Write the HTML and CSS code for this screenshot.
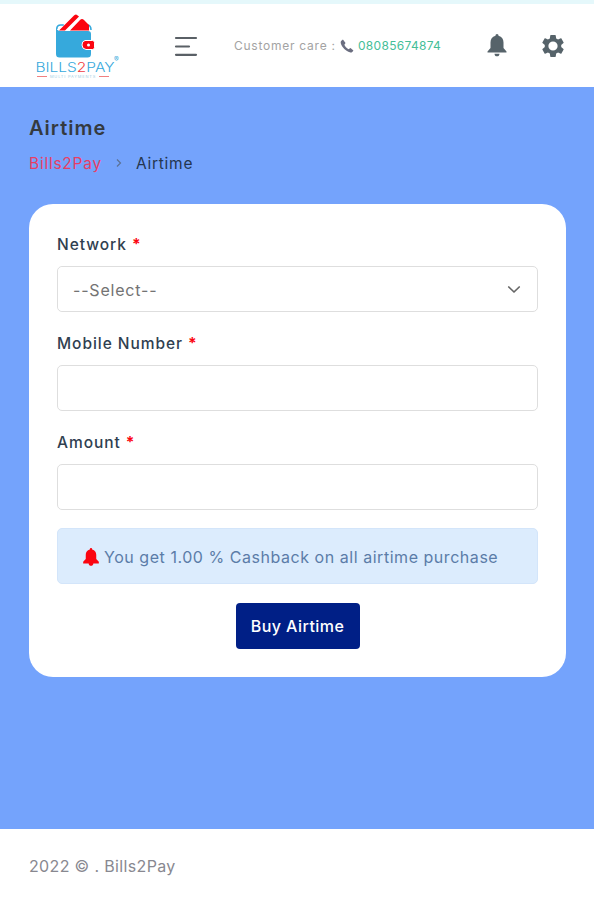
FILE: index.html
```
<!DOCTYPE html>
<html lang="en">
<head>
    <meta charset="UTF-8">
    <meta name="viewport" content="width=device-width, initial-scale=1.0">
    <title>Airtime</title>
    <link rel="stylesheet" href="styles.css">
</head>
<body>
    <header class="topbar">
        <a href="#" class="logo">
            <svg width="90" height="64" viewBox="0 0 90 64">
                <path d="M24 15v28q0 3.500 3.500 3.500h28q3.500 0 3.500-3.500V23q0-3-3-3H29q-5 0-5-5z" fill="#36a9dc"/>
                <path d="M24.800 18q0-4 4-4h3M55 14q4 0 4 5" fill="none" stroke="#36a9dc" stroke-width="1.600"/>
                <path d="M27 19.500 42 4.500q2-1.500 3-.500l2 1.500-14 14zM38 19.500 48 9q2-2 4 0l5 5v5.500z" fill="#fb0510"/>
                <path d="M53 29.500h7.500q2 0 2 2v5q0 2-2 2H54q-4-.500-4-4.500t3-4.500z" fill="#fb0510" stroke="#fff" stroke-width="1"/>
                <circle cx="56.500" cy="34" r="1.500" fill="#fff"/>
                <text x="3.500" y="60.500" class="logo_name" textLength="79" lengthAdjust="spacingAndGlyphs">BILLS<tspan fill="#ef3b41">2</tspan>PAY</text>
                <text x="82" y="51" class="logo_reg">®</text>
            </svg>
            <span class="logo_sub"><i></i>MULTI PAYMENTS<i></i></span>
        </a>
        <button type="button" class="btn_menu">
            <svg width="24" height="22" viewBox="0 0 24 22" stroke="#5a6066" stroke-width="2.200" stroke-linecap="round">
                <path d="M2 3h20M2 11.500h13M2 19.800h20"/>
            </svg>
        </button>
        <p class="care">
            <span class="care_txt">Customer care :</span>
            <svg class="phone" width="14" height="14" viewBox="0 0 24 24" fill="#6b6e80">
                <path d="M5 1 1.800 3.500C.500 5 1 9 4.500 13.500S13 22 18 23c2 .400 3-.500 5-3.500l-5-4.200-3.500 2.200C11.500 16 8.500 13 7.500 10L9.500 7z"/>
            </svg>
            <a href="#" class="care_no">08085674874</a>
        </p>
        <button type="button" class="btn_bell">
            <svg width="20" height="23" viewBox="0 0 20 23" fill="#56636a">
                <path d="M10 0c1 0 1.500.700 1.500 1.800 3.500.800 5 3.400 5 6.700v5.500l3 3.500v1H.500v-1l3-3.500V8.500c0-3.300 1.500-5.900 5-6.700C8.500.700 9 0 10 0zM7.500 19.700h5c0 1.600-1 2.600-2.500 2.600s-2.500-1-2.500-2.600z"/>
            </svg>
        </button>
        <button type="button" class="btn_setting">
            <svg width="22" height="22" viewBox="2 2 20 20" fill="#56636a">
                <path d="M19.430 12.980c.040-.320.070-.640.070-.980s-.030-.660-.070-.980l2.110-1.650c.190-.150.240-.420.120-.640l-2-3.460c-.120-.220-.390-.300-.610-.220l-2.490 1c-.520-.400-1.080-.730-1.690-.980l-.380-2.650C14.460 2.180 14.250 2 14 2h-4c-.250 0-.460.180-.490.420l-.380 2.650c-.610.250-1.170.590-1.690.980l-2.490-1c-.230-.090-.490 0-.610.220l-2 3.460c-.130.220-.070.490.120.640l2.110 1.650c-.040.320-.070.650-.070.980s.030.660.070.980l-2.110 1.650c-.190.150-.240.420-.120.640l2 3.460c.120.220.390.300.610.220l2.490-1c.520.400 1.080.730 1.690.980l.380 2.650c.030.240.240.420.490.420h4c.250 0 .460-.180.490-.420l.380-2.650c.610-.250 1.170-.590 1.690-.980l2.490 1c.230.090.490 0 .610-.220l2-3.460c.120-.220.070-.490-.120-.640zM12 16.200a4.200 4.200 0 1 1 0-8.400 4.200 4.200 0 0 1 0 8.400z"/>
            </svg>
        </button>
    </header>
    <main class="content">
        <h1>Airtime</h1>
        <nav class="breadcrumb">
            <a href="#">Bills2Pay</a>
            <svg width="6" height="8" viewBox="0 0 6 8" fill="none" stroke="#5b7194" stroke-width="1.200">
                <path d="M1 .500 4.500 4 1 7.500"/>
            </svg>
            <span>Airtime</span>
        </nav>
        <form action="" class="card">
            <label for="network">Network <b>*</b></label>
            <div class="select_box">
                <select id="network">
                    <option value="">--Select--</option>
                </select>
                <svg width="14" height="9" viewBox="0 0 14 9" fill="none" stroke="#666" stroke-width="1.700" stroke-linecap="round" stroke-linejoin="round">
                    <path d="M1.800 2 7 7l5.200-5"/>
                </svg>
            </div>
            <label for="mobile">Mobile Number <b>*</b></label>
            <input type="text" id="mobile">
            <label for="amount">Amount <b>*</b></label>
            <input type="text" id="amount">
            <div class="notice">
                <svg width="16" height="18" viewBox="0 0 20 23" fill="#fb0510">
                    <path d="M10 0c1 0 1.500.700 1.500 1.800 3.500.800 5.200 3.400 5.200 6.700v5.500l3.300 3.500v2.200h-7c0 1.600-1.500 3-3 3s-3-1.400-3-3H0v-2.200l3.300-3.500V8.500c0-3.300 1.700-5.900 5.200-6.700C8.500.700 9 0 10 0z"/>
                </svg>
                <span>You get 1.00 % Cashback on all airtime purchase</span>
            </div>
            <button type="button" class="btn_buy">Buy Airtime</button>
        </form>
    </main>
    <footer>2022 © . Bills2Pay</footer>
</body>
</html>
```
FILE: styles.css
```
*{
    margin: 0;
    padding: 0;
    box-sizing: border-box;
}
body{
    height: 900px;
    display: flex;
    flex-direction: column;
    font-family: "Inter", "Liberation Sans", sans-serif;
    font-size: 16px;
    background-color: #fff;
}
a{
    text-decoration: none;
}
button{
    border: none;
    background: none;
    font-family: inherit;
}
svg{
    display: block;
    flex-shrink: 0;
}
.topbar{
    height: 87px;
    display: flex;
    align-items: center;
    border-top: 4px solid #e5f8fb;
    padding: 0 30px 0 32px;
}
.logo{
    width: 90px;
    height: 70px;
}
.logo_name{
    font-size: 13.5px;
    font-weight: 300;
    fill: #36a9dc;
}
.logo_reg{
    font-size: 7px;
    fill: #36a9dc;
}
.logo_sub{
    display: flex;
    justify-content: center;
    align-items: center;
    gap: 3px;
    height: 4px;
    padding-right: 8px;
    font-size: 4px;
    line-height: 4px;
    letter-spacing: 0.8px;
    white-space: nowrap;
    color: #a4cfe4;
}
.logo_sub i{
    width: 10px;
    height: 1px;
    background-color: #f08080;
}
.btn_menu{
    margin-left: 52px;
}
.care{
    display: flex;
    align-items: center;
    margin-left: 36px;
    font-size: 12px;
    white-space: nowrap;
}
.care_txt{
    width: 102px;
    letter-spacing: 0.75px;
    color: #a3a3a3;
}
.phone{
    margin: 0 4px 0 4px;
}
.care_no{
    width: 84px;
    letter-spacing: 0.3px;
    color: #45be98;
}
.btn_bell{
    margin-left: auto;
}
.btn_setting{
    margin-left: 35px;
}
.content{
    height: 742px;
    padding: 29px 28px 0 29px;
    background-color: #74a3fc;
}
h1{
    font-size: 20px;
    line-height: 24px;
    font-weight: 600;
    letter-spacing: 1px;
    color: #343a40;
}
.breadcrumb{
    display: flex;
    align-items: center;
    height: 24px;
    margin-top: 11px;
    font-size: 15.5px;
    letter-spacing: 0.75px;
    color: #24364f;
}
.breadcrumb a{
    color: #e83e66;
}
.breadcrumb svg{
    margin: 0 14px;
}
.card{
    display: flex;
    flex-direction: column;
    height: 473px;
    margin-top: 29px;
    padding: 30px 28px 0;
    border-radius: 24px;
    background-color: #fff;
}
label{
    height: 22px;
    line-height: 22px;
    margin-bottom: 10px;
    font-size: 15.5px;
    font-weight: 500;
    letter-spacing: 0.95px;
    color: #2f4050;
}
label b{
    color: #fb0510;
}
input, select{
    width: 100%;
    height: 46px;
    margin-bottom: 21px;
    border: 1px solid #dedede;
    border-radius: 5px;
    outline: none;
    background-color: #fff;
}
.select_box{
    display: flex;
    align-items: center;
    height: 46px;
    margin-bottom: 21px;
    padding-right: 16px;
    border: 1px solid #dedede;
    border-radius: 5px;
}
select{
    appearance: none;
    height: 44px;
    margin: 0;
    padding: 1px 0 0 15px;
    border: none;
    font-family: inherit;
    font-size: 16px;
    letter-spacing: 0.8px;
    color: #737373;
}
#amount{
    margin-bottom: 18px;
}
.notice{
    display: flex;
    align-items: center;
    height: 56px;
    padding: 1px 0 0 25px;
    gap: 5px;
    border: 1px solid #d3e5fa;
    border-radius: 5px;
    background-color: #dcecfd;
    white-space: nowrap;
    letter-spacing: 0.54px;
    color: #5b7ca8;
}
.btn_buy{
    align-self: center;
    width: 124px;
    height: 46px;
    margin-top: 19px;
    border-radius: 4px;
    background-color: #001f86;
    color: #fff;
    font-size: 16px;
    font-weight: 500;
    letter-spacing: 0.45px;
}
footer{
    height: 71px;
    padding: 26px 29px 0;
    line-height: 22px;
    letter-spacing: 0.35px;
    color: #888890;
}
```
